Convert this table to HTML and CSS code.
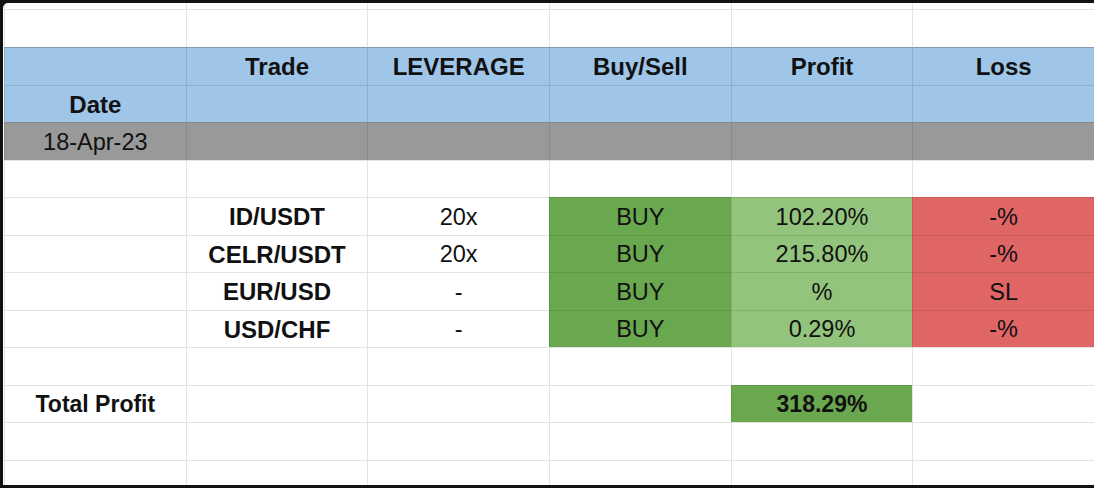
FILE: index.html
```html
<!DOCTYPE html>
<html>
<head>
<meta charset="utf-8">
<link rel="stylesheet" href="styles.css">
</head>
<body>
<div class="sheet">
  <div class="row h6 first"><div></div><div></div><div></div><div></div><div></div><div></div></div>
  <div class="row h38"><div></div><div></div><div></div><div></div><div></div><div></div></div>
  <div class="row h38 blue top-edge b"><div></div><div>Trade</div><div>LEVERAGE</div><div>Buy/Sell</div><div>Profit</div><div>Loss</div></div>
  <div class="row h37 blue b"><div>Date</div><div></div><div></div><div></div><div></div><div></div></div>
  <div class="row h38 grey"><div>18-Apr-23</div><div></div><div></div><div></div><div></div><div></div></div>
  <div class="row h37"><div></div><div></div><div></div><div></div><div></div><div></div></div>
  <div class="row h38"><div></div><div class="b">ID/USDT</div><div>20x</div><div class="buy">BUY</div><div class="gain">102.20%</div><div class="loss">-%</div></div>
  <div class="row h37"><div></div><div class="b">CELR/USDT</div><div>20x</div><div class="buy">BUY</div><div class="gain">215.80%</div><div class="loss">-%</div></div>
  <div class="row h38"><div></div><div class="b">EUR/USD</div><div>-</div><div class="buy">BUY</div><div class="gain">%</div><div class="loss">SL</div></div>
  <div class="row h37"><div></div><div class="b">USD/CHF</div><div>-</div><div class="buy">BUY</div><div class="gain">0.29%</div><div class="loss">-%</div></div>
  <div class="row h38"><div></div><div></div><div></div><div></div><div></div><div></div></div>
  <div class="row h37"><div class="b total">Total Profit</div><div></div><div></div><div></div><div class="buy b total">318.29%</div><div></div></div>
  <div class="row h38"><div></div><div></div><div></div><div></div><div></div><div></div></div>
  <div class="row h25"><div></div><div></div><div></div><div></div><div></div><div></div></div>
</div>
</body>
</html>
```

FILE: styles.css
```css
* { box-sizing: border-box; }
html, body {
  margin: 0;
  padding: 0;
  background: #111;
  width: 1094px;
  height: 488px;
  overflow: hidden;
}
.sheet {
  margin: 3px 0 0 3px;
  padding-left: 1px;
  width: 1091px;
  background: #fff;
  border-radius: 5px 0 0 0;
  font-family: "Liberation Sans", Arial, sans-serif;
  font-size: 23.5px;
  color: #111;
}
.row {
  display: grid;
  grid-template-columns: repeat(6, 1fr);
}
.row > div {
  border-left: 1px solid rgba(0,0,0,0.11);
  border-top: 1px solid rgba(0,0,0,0.11);
  display: flex;
  align-items: center;
  justify-content: center;
  white-space: nowrap;
  padding-top: 1px;
}
.first > div { border-top: none; }
.h6 { height: 6px; }
.h38 { height: 38px; }
.h37 { height: 37px; }
.h25 { height: 25px; }
.blue > div { background: #9fc5e8; }
.top-edge > div { border-top-color: rgba(0,0,0,0.2); }
.grey > div { background: #999999; }
.b, .b > div { font-weight: bold; font-size: 24px; }
.buy { background: #6aa84f; }
.gain { background: #93c47d; }
.loss { background: #e06666; }
.b.total { font-size: 23px; }
```
